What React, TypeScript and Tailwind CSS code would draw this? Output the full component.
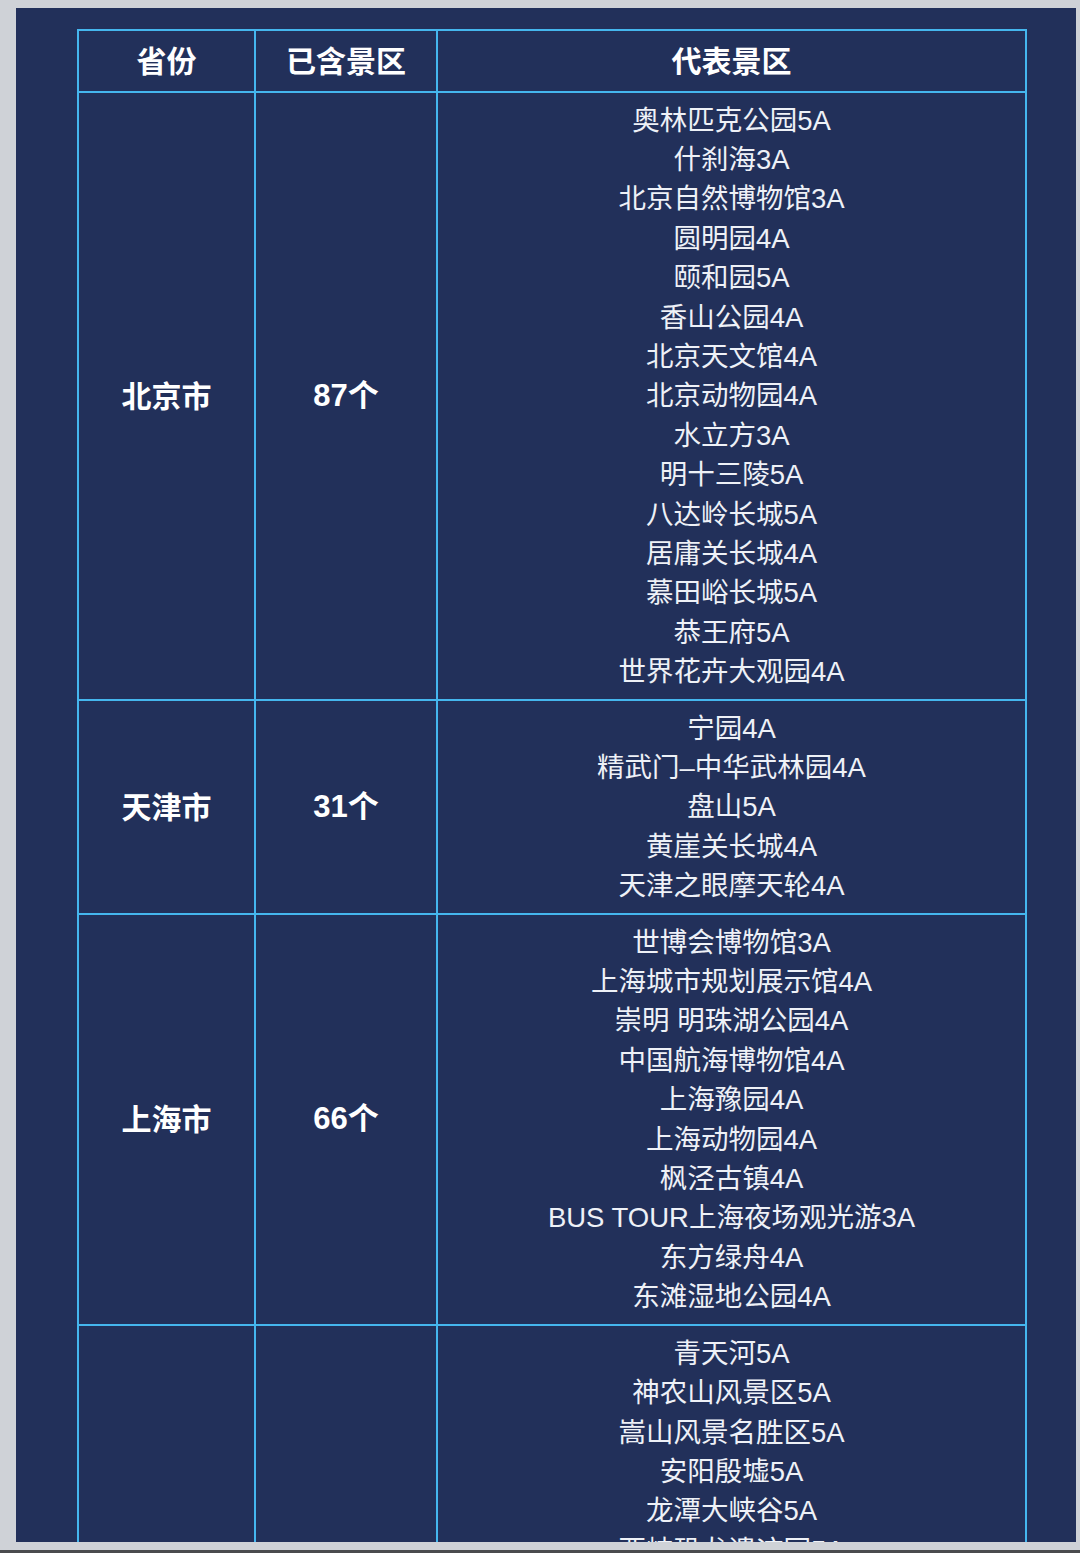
import React from "react";

type Row = { province: string; count?: string; spots: string[] };

const rows: Row[] = [
  {
    province: "北京市",
    count: "87个",
    spots: [
      "奥林匹克公园5A",
      "什刹海3A",
      "北京自然博物馆3A",
      "圆明园4A",
      "颐和园5A",
      "香山公园4A",
      "北京天文馆4A",
      "北京动物园4A",
      "水立方3A",
      "明十三陵5A",
      "八达岭长城5A",
      "居庸关长城4A",
      "慕田峪长城5A",
      "恭王府5A",
      "世界花卉大观园4A",
    ],
  },
  {
    province: "天津市",
    count: "31个",
    spots: ["宁园4A", "精武门–中华武林园4A", "盘山5A", "黄崖关长城4A", "天津之眼摩天轮4A"],
  },
  {
    province: "上海市",
    count: "66个",
    spots: [
      "世博会博物馆3A",
      "上海城市规划展示馆4A",
      "崇明 明珠湖公园4A",
      "中国航海博物馆4A",
      "上海豫园4A",
      "上海动物园4A",
      "枫泾古镇4A",
      "BUS TOUR上海夜场观光游3A",
      "东方绿舟4A",
      "东滩湿地公园4A",
    ],
  },
  {
    province: "河南省",
    spots: [
      "青天河5A",
      "神农山风景区5A",
      "嵩山风景名胜区5A",
      "安阳殷墟5A",
      "龙潭大峡谷5A",
      "西峡恐龙遗迹园5A",
      "白云山5A",
      "老君山5A",
      "鸡冠洞5A",
      "龙门石窟5A",
      "清明上河园5A",
      "云台山5A",
      "红旗渠5A",
      "尧山5A",
    ],
  },
];

const font = { fontFamily: '"Liberation Sans", "Noto Sans CJK SC", sans-serif' };

export default function App() {
  return (
    <div className="w-[1080px] h-[1553px] bg-[#cfd2d7] flex flex-col overflow-hidden" style={font}>
      <div className="flex-1 min-h-0 flex pt-[8px] pl-[16px] pr-[4px] pb-[8px]">
        <div className="flex-1 bg-[#22305a] overflow-hidden pt-[21px] pl-[61px]">
          <table className="border-collapse w-[950px] table-fixed">
            <colgroup>
              <col className="w-[177px]" />
              <col className="w-[182px]" />
              <col />
            </colgroup>
            <thead>
              <tr className="h-[62px]">
                {["省份", "已含景区", "代表景区"].map((h) => (
                  <th
                    key={h}
                    className="border-2 border-[#45b6ee] text-white text-[30px] font-bold text-center align-middle"
                  >
                    {h}
                  </th>
                ))}
              </tr>
            </thead>
            <tbody>
              {rows.map((r) => (
                <tr key={r.province}>
                  <td className="border-2 border-[#45b6ee] text-white text-[30px] font-bold text-center align-middle">
                    {r.province}
                  </td>
                  <td className="border-2 border-[#45b6ee] text-white text-[31px] font-semibold text-center align-middle">
                    {r.count}
                  </td>
                  <td className="border-2 border-[#45b6ee] text-[#eef1f7] text-[27.5px] leading-[39.4px] text-center align-middle py-[7.5px] whitespace-nowrap">
                    {r.spots.map((s) => (
                      <div key={s}>{s}</div>
                    ))}
                  </td>
                </tr>
              ))}
            </tbody>
          </table>
        </div>
      </div>
      <div className="h-[3px] bg-[#4a4b4e]" />
    </div>
  );
}
